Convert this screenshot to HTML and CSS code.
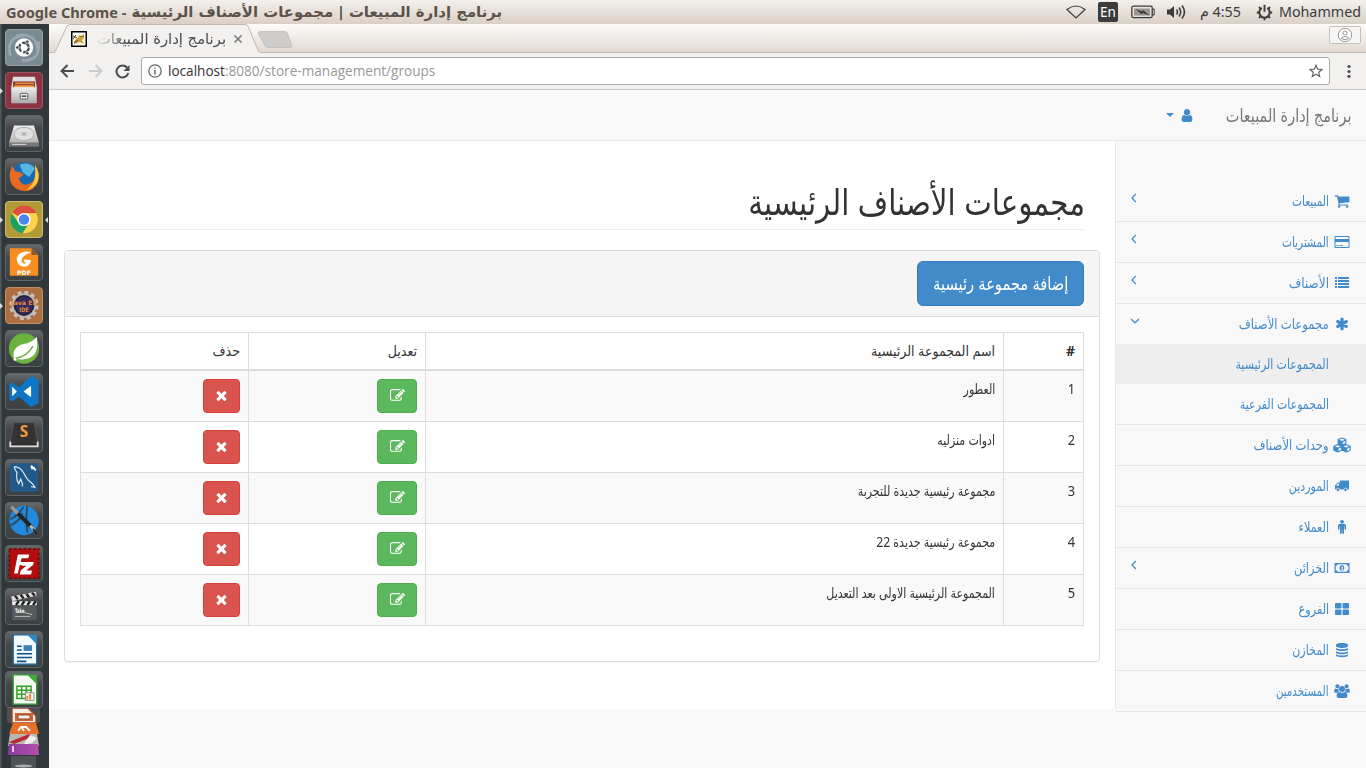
FILE: index.html
```html
<!DOCTYPE html>
<html lang="ar">
<head>
<meta charset="utf-8">
<title>برنامج إدارة المبيعات | مجموعات الأصناف الرئيسية</title>
<link rel="stylesheet" href="styles.css">
</head>
<body>
<svg class="defs" width="0" height="0">
  <defs>
    <linearGradient id="metal" x1="0" y1="0" x2="0" y2="1"><stop offset="0" stop-color="#eee"/><stop offset="1" stop-color="#aaa"/></linearGradient>
    <linearGradient id="purple" x1="0" y1="0" x2="1" y2="0"><stop offset="0" stop-color="#8a3c9c"/><stop offset="1" stop-color="#b64fae"/></linearGradient>
    <symbol id="times" viewBox="0 0 1792 1792"><path d="M1490 1322q0 40-28 68l-136 136q-28 28-68 28t-68-28l-294-294-294 294q-28 28-68 28t-68-28l-136-136q-28-28-28-68t28-68l294-294-294-294q-28-28-28-68t28-68l136-136q28-28 68-28t68 28l294 294 294-294q28-28 68-28t68 28l136 136q28 28 28 68t-28 68l-294 294 294 294q28 28 28 68z"/></symbol>
    <symbol id="edit" viewBox="0 0 1792 1792"><path d="M888 1184l116-116-152-152-116 116v56h96v96h56zm440-720q-16-16-33 1l-350 350q-17 17-1 33t33-1l350-350q17-17 1-33zm80 594v190q0 119-84.5 203.5t-203.5 84.5h-832q-119 0-203.5-84.5t-84.5-203.5v-832q0-119 84.5-203.5t203.5-84.5h832q63 0 117 25 15 7 18 23 3 17-9 29l-49 49q-14 14-32 8-23-6-45-6h-832q-66 0-113 47t-47 113v832q0 66 47 113t113 47h832q66 0 113-47t47-113v-126q0-13 9-22l64-64q15-15 35-7t20 29zm-96-738l288 288-672 672h-288v-288zm444 132l-92 92-288-288 92-92q28-28 68-28t68 28l152 152q28 28 28 68t-28 68z"/></symbol>
    <symbol id="cart" viewBox="0 0 1792 1792"><path d="M704 1536q0 52-38 90t-90 38-90-38-38-90 38-90 90-38 90 38 38 90zm896 0q0 52-38 90t-90 38-90-38-38-90 38-90 90-38 90 38 38 90zm128-1088v512q0 24-16.500 42.500t-40.500 21.500l-1044 122q13 60 13 70 0 16-24 64h920q26 0 45 19t19 45-19 45-45 19h-1024q-26 0-45-19t-19-45q0-11 8-31.500t16-36 21.500-40 15.500-29.500l-177-823h-204q-26 0-45-19t-19-45 19-45 45-19h256q16 0 28.500 6.500t19.500 15.500 13 24.500 8 26 5.500 29.500 4.500 26h1201q26 0 45 19t19 45z"/></symbol>
    <symbol id="user" viewBox="0 0 1792 1792"><path d="M1536 1399q0 109-62.500 187t-150.500 78h-854q-88 0-150.500-78t-62.500-187q0-85 8.500-160.500t31.500-152 58.500-131 94-89 134.500-34.500q131 128 313 128t313-128q76 0 134.500 34.500t94 89 58.500 131 31.500 152 8.500 160.500zm-256-887q0 159-112.500 271.500t-271.500 112.500-271.500-112.500-112.500-271.500 112.500-271.500 271.500-112.500 271.500 112.500 112.500 271.500z"/></symbol>
    <symbol id="card" viewBox="0 0 16 16"><path fill-rule="evenodd" d="M1.500 2h13q1 0 1 1v10q0 1-1 1h-13q-1 0-1-1V3q0-1 1-1zM1.500 3v2h13V3zM1.500 8v5h13V8zM2.500 11h2v1h-2zM5.500 11h3v1h-3z"/></symbol>
    <symbol id="list" viewBox="0 0 16 16"><path d="M1 2h2v2H1zM4 2h11v2H4zM1 5h2v2H1zM4 5h11v2H4zM1 8h2v2H1zM4 8h11v2H4zM1 11h2v2H1zM4 11h11v2H4z"/></symbol>
    <symbol id="star6" viewBox="0 0 16 16"><path d="M8 3.200v9.600M3.800 5.600l8.400 4.800M12.200 5.600l-8.400 4.800" stroke="#428bca" stroke-width="3.300" stroke-linecap="round"/></symbol>
    <symbol id="cubes" viewBox="0 0 18 16"><g fill="#428bca" stroke="#428bca" stroke-width="1.200" stroke-linejoin="round"><path d="M9 1l3.800 1.600v4L9 8.300 5.200 6.600v-4zM4.700 7.700l3.800 1.600v4l-3.800 1.700L.9 13.300v-4zM13.300 7.700l3.800 1.600v4l-3.800 1.700-3.800-1.700v-4z"/></g><path fill="#f8f8f8" d="M9 1.500l2.800 1.200L9 3.900 6.200 2.700zM9.800 5.100l2.500-1.200v2.300L9.800 7.300zM4.700 8.200l2.800 1.200-2.800 1.200-2.800-1.200zM5.500 11.800L8 10.600v2.300L5.500 14zM13.300 8.200l2.800 1.200-2.800 1.200-2.800-1.200zM14.100 11.800l2.500-1.200v2.300L14.100 14z"/></symbol>
    <symbol id="truck" viewBox="0 0 16 16"><path d="M6 2.500h9v9H6zM1 7.500l2.500-3H6v7H1z"/><path fill="#f8f8f8" d="M2 7.500l1.800-2H5v2z"/><circle cx="4" cy="11.800" r="1.700" stroke="#f8f8f8" stroke-width=".7"/><circle cx="11.500" cy="11.800" r="1.700" stroke="#f8f8f8" stroke-width=".7"/></symbol>
    <symbol id="male" viewBox="0 0 16 16"><circle cx="8" cy="2.800" r="1.900"/><path d="M5.500 5h5q1.500 0 1.500 1.500V10q0 .8-.7.800t-.8-.8V7.200H10v6.900q0 .9-.9.900t-.9-.9v-3.600h-.4v3.600q0 .9-.9.900t-.9-.9V7.200h-.5V10q0 .8-.8.800T4 10V6.500Q4 5 5.500 5z"/></symbol>
    <symbol id="money" viewBox="0 0 16 16"><path fill-rule="evenodd" d="M.5 3h15v10H.5zM3.500 4.200q0 1.800-1.800 1.800v4q1.800 0 1.800 1.800h9q0-1.800 1.800-1.800V6q-1.800 0-1.800-1.800z"/><path fill-rule="evenodd" d="M8 5c3.200 0 3.200 6 0 6s-3.200-6 0-6zm-.8 1.500v1h.5v2H7v.7h2.200v-.7h-.5v-3z"/></symbol>
    <symbol id="large" viewBox="0 0 16 16"><rect x="1" y="2" width="6.500" height="5.500" rx="1"/><rect x="8.500" y="2" width="6.500" height="5.500" rx="1"/><rect x="1" y="8.500" width="6.500" height="5.500" rx="1"/><rect x="8.500" y="8.500" width="6.500" height="5.500" rx="1"/></symbol>
    <symbol id="database" viewBox="0 0 16 16"><path d="M2 3c0-2.600 12-2.600 12 0v1c0 2.600-12 2.600-12 0zM2 6c2 1.700 10 1.700 12 0v1.300c0 2.400-12 2.400-12 0zM2 9.200c2 1.700 10 1.700 12 0v1.300c0 2.400-12 2.400-12 0zM2 12.300c2 1.700 10 1.700 12 0v.9c0 2.600-12 2.600-12 0z"/></symbol>
    <symbol id="users" viewBox="0 0 16 16"><circle cx="3.400" cy="3.300" r="2"/><circle cx="12.600" cy="3.300" r="2"/><path d="M.3 9V6.500Q.5 5.300 2 5.700q1.500.6 2.800-.2Q4 7 5 8.500 3.500 8.800 3 9.800H1Q.3 9.600.3 9zM15.700 9V6.500q-.2-1.200-1.700-.8-1.500.6-2.800-.2.800 1.500-.2 3 1.500.3 2 1.300h2q.7-.2.700-.8z"/><circle cx="8" cy="5.900" r="3"/><path d="M4.900 8.700Q8 11 11.100 8.700q2.300.8 2.300 4.300 0 2-1.900 2h-7q-1.900 0-1.900-2 0-3.500 2.300-4.300z"/></symbol>
    <symbol id="left" viewBox="0 0 8 10"><path d="M5.800 1L2 5l3.800 4" fill="none" stroke="#428bca" stroke-width="1.200"/></symbol>
    <symbol id="down" viewBox="0 0 10 8"><path d="M1 2l4 3.800L9 2" fill="none" stroke="#428bca" stroke-width="1.200"/></symbol>
  </defs>
</svg>

<header class="menubar">
  <div class="wintitle" dir="rtl"><span class="ar">برنامج إدارة المبيعات | مجموعات الأصناف الرئيسية</span><span class="lat" dir="ltr">Google Chrome -</span></div>
  <div class="indicators">
    <svg class="wifi" width="20" height="16" viewBox="0 0 20 16"><path d="M1 5.500Q10-1.500 19 5.500L10 14z" fill="none" stroke="#3c3c3c" stroke-width="1.200"/></svg>
    <span class="lang">En</span>
    <svg class="battery" width="24" height="14" viewBox="0 0 24 14"><rect x=".8" y="1.200" width="20.400" height="11.400" rx="1.500" fill="none" stroke="#3c3c3c" stroke-width="1.300"/><path d="M21.500 4h1.700v6h-1.700" fill="none" stroke="#3c3c3c"/><rect x="3" y="3.500" width="16" height="7" fill="#999691"/><path d="M4.500 4l7 2.600.6-1.600L18.500 10.500l-7-2.600-.6 1.600z" fill="#3c3c3c"/></svg>
    <svg class="sound" width="21" height="16" viewBox="0 0 21 16"><path d="M1 5.500h3l4-3.500v12l-4-3.500H1z" fill="#3c3c3c"/><path d="M10.500 5.500q2 2.500 0 5M13 3.500q3.500 4.500 0 9M16 1.500q5 6.500 0 13" fill="none" stroke="#3c3c3c" stroke-width="1.600"/></svg>
    <span class="clock" dir="rtl">4:55 م</span>
    <svg class="gear" width="17" height="17" viewBox="0 0 17 17"><path d="M5.800 4A5.200 5.200 0 1 0 11.200 4" fill="none" stroke="#3c3c3c" stroke-width="2"/><path d="M8.500 .8v7M.8 8.500h2.500M13.700 8.500h2.500M8.500 13.500v2.700M3 3l1.800 1.800M14 3l-1.800 1.800M3 14l1.800-1.800M14 14l-1.800-1.800" stroke="#3c3c3c" stroke-width="1.900"/></svg>
    <span class="who">Mohammed</span>
  </div>
</header>

<div class="desktop">
  <aside class="launcher">
    <div class="app dash"><svg viewBox="0 0 37 37"><path d="M4 27Q-1 7 19 6M10 6q22-4 23 16M34 12q2 22-18 20" fill="none" stroke="#b7c2c8" stroke-width="3" opacity=".5"/><circle cx="18.500" cy="18.500" r="9.700" fill="#fff"/><circle cx="18.500" cy="18.500" r="5" fill="none" stroke="#4a4f52" stroke-width="2.500" stroke-dasharray="8.700 1.800"/><g fill="#4a4f52" stroke="#fff" stroke-width=".7"><circle cx="11.500" cy="18.500" r="1.900"/><circle cx="22" cy="12.400" r="1.900"/><circle cx="22" cy="24.600" r="1.900"/></g></svg></div>
    <div class="app red run"><svg viewBox="0 0 37 37"><path d="M7 4h23l2 11H5z" fill="#ddd"/><path d="M7 9h23v8H7z" fill="#7c2c12"/><path d="M9 10h20v2H9z" fill="#e9894e"/><path d="M8 13h21v3H8z" fill="#f0a050"/><path d="M5 15h27v17H5z" fill="url(#metal)"/><rect x="14.500" y="21.500" width="8" height="6" rx="1" fill="#eee" stroke="#555"/><path d="M16 24.500h5" stroke="#444" stroke-width="1.500"/></svg></div>
    <div class="app"><svg viewBox="0 0 37 37"><path d="M8 10h21l5 17v5H3v-5z" fill="url(#metal)"/><ellipse cx="18.500" cy="19" rx="10.500" ry="7" fill="#e0e0e0" stroke="#aaa"/><ellipse cx="18.500" cy="19" rx="3" ry="2" fill="#bbb"/><path d="M3 28h31v4H3z" fill="#777"/><path d="M6 30h15" stroke="#ddd"/></svg></div>
    <div class="app"><svg viewBox="0 0 37 37"><circle cx="19" cy="17.500" r="14" fill="#1b68b2"/><path d="M14 6q10-4 16 4l-6 9-7-5z" fill="#56b6e3"/><path d="M30 6q7 9 3 19-4 9-14 9Q7 33 4 23 2 15 6 7l3 6 6 1 3 3-5 3q2 8 9 7 8-2 9-10 1-6-1-11z" fill="#e66a20"/><path d="M30 6q7 10 2 20-5 6-11 7 8-6 9-14 1-7 0-13z" fill="#fdc83d"/></svg></div>
    <div class="app gold run active"><svg viewBox="0 0 37 37"><circle cx="18.500" cy="18.500" r="14.500" fill="#fdd14a"/><path d="M18.500 18.500L6 11.200A14.500 14.500 0 0 1 31.500 11.500H18.500z" fill="#dd4e3f"/><path d="M5.500 12A14.500 14.500 0 0 0 17 33l7-11-11.500-.5z" fill="#1da261"/><circle cx="18.500" cy="18.500" r="7" fill="#fff"/><circle cx="18.500" cy="18.500" r="5.500" fill="#4b83ef"/></svg></div>
    <div class="app"><svg viewBox="0 0 37 37"><path d="M3.500 3.500h23l7 7v22h-30z" fill="#f88d20"/><path d="M26.500 3.500v7h7z" fill="#8b5a26"/><path d="M26 8q-5-2-10 0-6 3-5 8 1 6 7 7 7 0 8-7l-7-1-1 3 3 .5q-3 3-5-1-1-6 10-9.500z" fill="#fff"/><text x="18.500" y="31.500" text-anchor="middle" class="tiny white">PDF</text></svg></div>
    <div class="app brown run"><svg viewBox="0 0 37 37"><circle cx="18.500" cy="18.500" r="13.500" fill="none" stroke="#c4c4c4" stroke-width="4" stroke-dasharray="4 3.070"/><circle cx="18.500" cy="18.500" r="12" fill="#2a2237" stroke="#bbb" stroke-width="2"/><circle cx="18.500" cy="18.500" r="9" fill="#352c62"/><text x="18.500" y="18" text-anchor="middle" textLength="27" lengthAdjust="spacingAndGlyphs" class="tiny orange">Java EE</text><text x="18.500" y="25" text-anchor="middle" textLength="10" lengthAdjust="spacingAndGlyphs" class="tiny orange">IDE</text></svg></div>
    <div class="app"><svg viewBox="0 0 37 37"><circle cx="18.500" cy="18.500" r="16" fill="#6cb33e"/><path d="M32 6q3 19-9 23-7 2-15 0-3-11 9-15Q28 12 32 6z" fill="#fff"/><path d="M9 29q13-2 19-13" fill="none" stroke="#6cb33e" stroke-width="1.500"/><circle cx="9" cy="30" r="1.500" fill="#fff"/></svg></div>
    <div class="app"><svg viewBox="0 0 37 37"><path d="M26 2l8 4v25l-8 4-13-11-7 5-3-2V10l3-1 7 5z" fill="#0f75c5"/><path d="M6 13.500v10l5-5zM26 12.500v12l-8-6z" fill="#fff"/></svg></div>
    <div class="app"><svg viewBox="0 0 37 37"><path d="M8 6h21l4 20v5H4v-5z" fill="#333" stroke="#555"/><path d="M4 26v5h29v-5" fill="none" stroke="#ddd" stroke-width="2"/><text x="18.500" y="21" text-anchor="middle" class="subl">S</text></svg></div>
    <div class="app"><svg viewBox="0 0 37 37"><rect x="3.500" y="3.500" width="30" height="30" rx="3" fill="#215a88"/><path d="M8 7q7 0 11 8 3 6 6 8 4 3 5 6l-4-1M8 7q1 4 3 6-1 8 2 12l2-5q2 4 2 8" fill="none" stroke="#dbe8f1" stroke-width="1.300"/><path d="M26 6l5 5M26 6l1 3 3-1" stroke="#fff" stroke-width="1.800" fill="none"/></svg></div>
    <div class="app"><svg viewBox="0 0 37 37"><circle cx="18.500" cy="18.500" r="15.500" fill="#2289dd"/><path d="M18 4q-6 10-14 13M22 3q-2 14 0 28M4 24q10-5 13-13" fill="none" stroke="#2c4a60" stroke-width="2"/><path d="M5 4l10 10" stroke="#999" stroke-width="3.500"/><path d="M12 11l15 15" stroke="#222" stroke-width="4"/><path d="M25 24l4 4" stroke="#bbb" stroke-width="3"/><path d="M28 27l4 6" stroke="#222" stroke-width="1.500"/></svg></div>
    <div class="app"><svg viewBox="0 0 37 37"><rect x="3" y="3" width="31" height="31" fill="#b40d0d" stroke="#720d0d" stroke-width="2" stroke-dasharray="3 2"/><path d="M12 9h12l-1 4h-7l-1 4h6l-1 3h-6l-2 9H8zM17 17h12l-1 3-7 6h6l-1 4H14l1-4 6-5h-5z" fill="#fff"/></svg></div>
    <div class="app"><svg viewBox="0 0 37 37"><path d="M6 17h26v16H6z" fill="#555a5c"/><path d="M6 13h26v4H6z" fill="#eee"/><path d="M5 8l26-5 1 4-26 6z" fill="#ddd"/><path d="M9 7l3 4M15 6l3 4M21 5l3 4M27 4l3 3M10 17l3-4M16 17l3-4M22 17l3-4M28 17l3-4" stroke="#222" stroke-width="2.500"/><text x="9" y="25" textLength="10" lengthAdjust="spacingAndGlyphs" class="tiny white">Take</text><path d="M19 25l8 2M9 29h16" stroke="#bbb"/></svg></div>
    <div class="app"><svg viewBox="0 0 37 37"><path d="M7 3h17l8 8v23H7z" fill="#f4f8fa" stroke="#15659b" stroke-width="1.500"/><path d="M22 3h10v10z" fill="#2b8ac9"/><path d="M11 15h5M11 19h5M11 23h16M11 27h16M11 31h10" stroke="#0d5488" stroke-width="1.700"/><rect x="18" y="14" width="9" height="6" fill="#3b83b5"/></svg></div>
    <div class="app calc"><svg viewBox="0 0 37 37"><path d="M7 3h17l8 8v23H7z" fill="#f4faf2" stroke="#2b9a2b" stroke-width="1.500"/><path d="M22 3h10v10z" fill="#3fae38"/><path d="M11 15h15v13H11zM11 19.300h15M11 23.600h15M16 15v13M21 15v13" fill="none" stroke="#37a02e" stroke-width="1.600"/><path d="M20 22h9v8h-9z" fill="#fff" stroke="#888"/><path d="M22 29v-4M25 29v-6" stroke="#e87f32" stroke-width="2"/></svg></div>
    <svg class="stack" width="37" height="62" viewBox="0 0 37 62"><rect x="2" width="33" height="16" rx="3" fill="#4a4f51"/><path d="M7 1h16l8 8v7H7z" fill="#f3ece5" stroke="#9b4825" stroke-width="1.500"/><path d="M10 6h18v8H10z" fill="#ca6438"/><path d="M13 8h12v4H13z" fill="#eee" stroke="#9b4825"/><path d="M8 16h23l3 11H4z" fill="#e86f29"/><path d="M13 24l3-4h5l4 4M17 21l2 3" fill="none" stroke="#fff" stroke-width="1.800"/><path d="M5 27h27l2 12H3z" fill="#b9b7b1"/><path d="M4 35l20-8 3 3-18 7z" fill="#b62b34"/><path d="M25 28l7 3-5 5-9 2" fill="#eee"/><path d="M4 37h29l1 11H3z" fill="url(#purple)"/><path d="M8 39v6" stroke="#efc9f0" stroke-width="2"/><path d="M6 49h25v13H6z" fill="#4d5254"/><ellipse cx="18.500" cy="59" rx="9" ry="1.500" fill="#aaa"/></svg>
  </aside>

  <section class="chrome">
    <div class="tabs">
      <svg class="tabshape" width="245" height="29" viewBox="0 0 245 29"><path d="M0 28.500h4.500Q6 28.500 7 26L18 2Q19 .5 21 .5H196Q198 .5 199 2L209 26Q210 28.500 212 28.500H245V30H0z" fill="#f2f1f0" stroke="#c3b6aa"/><path d="M211 7.500H235Q237.500 7.500 238.500 9.500L242.500 21Q243 23.500 241 23.500H219Q217 23.500 216 21.500L209.500 10Q209 7.500 211 7.500z" fill="#cfcdcb" stroke="#c4c1be"/></svg>
      <div class="tab"><svg class="fav" width="16" height="16" viewBox="0 0 16 16"><rect x=".75" y=".75" width="14.500" height="14.500" fill="#f8f8ef" stroke="#000" stroke-width="1.500"/><path d="M3 11q1-3 4-4l1-3 2 1 3-2v4l-2 2 2 4-4-2-3 1-3 1z" fill="#d29b3a"/><path d="M2 5l4 2M2 8l3-4M10 5v1M12 5v1M3 12l4-3" stroke="#554a38"/></svg><span class="tabname" dir="rtl">برنامج إدارة المبيعات</span><svg class="x" width="8" height="8" viewBox="0 0 8 8"><path d="M.5.5l7 7M7.500.5l-7 7" stroke="#777" stroke-width="1.500"/></svg></div>
      <svg class="profile" width="32" height="18" viewBox="0 0 32 18"><rect x=".5" y=".5" width="31" height="17" rx="1" fill="#f7f5f3" stroke="#c2bfbc"/><circle cx="16" cy="9" r="6.700" fill="#fff" stroke="#999"/><circle cx="16" cy="7" r="2" fill="none" stroke="#999"/><path d="M12 12.500q4-4 8 0-4 2.500-8 0z" fill="none" stroke="#999"/></svg>
    </div>
    <div class="toolbar">
      <svg class="back" width="14" height="14" viewBox="0 0 14 14"><path d="M7.500 1L1.500 7l6 6M1.500 7H14" fill="none" stroke="#4b4b4b" stroke-width="1.900"/></svg>
      <svg class="fwd" width="14" height="14" viewBox="0 0 14 14"><path d="M6.500 1l6 6-6 6M12.500 7H0" fill="none" stroke="#ccc" stroke-width="1.800"/></svg>
      <svg class="reload" width="15" height="15" viewBox="0 0 15 15"><path d="M12 3.500A6 6 0 1 0 13.300 9" fill="none" stroke="#4b4b4b" stroke-width="2"/><path d="M14.500 1v6h-6z" fill="#4b4b4b"/></svg>
      <div class="omnibox"><svg width="14" height="14" viewBox="0 0 14 14"><circle cx="7" cy="7" r="6.200" fill="none" stroke="#666" stroke-width="1.300"/><path d="M7 6v4.500M7 3.500v1.300" stroke="#666" stroke-width="1.500"/></svg><span class="url"><b>localhost</b>:8080/store-management/groups</span><svg class="bookmark" width="14" height="14" viewBox="0 0 14 14"><path d="M7 1.200l1.700 4 4.300.3-3.300 2.800 1 4.200L7 10.200l-3.700 2.300 1-4.200L1 5.500l4.300-.3z" fill="none" stroke="#666" stroke-width="1.200"/></svg></div>
      <svg class="dots" width="4" height="14" viewBox="0 0 4 14"><g fill="#4b4b4b"><circle cx="2" cy="2.500" r="1.600"/><circle cx="2" cy="7.500" r="1.600"/><circle cx="2" cy="12.300" r="1.600"/></g></svg>
    </div>

    <div class="page" dir="rtl">
      <nav class="navbar"><span class="brand"><span class="sq k89">برنامج إدارة المبيعات</span></span><span class="account"><svg class="ic"><use href="#user"/></svg><svg class="caret" width="8" height="4" viewBox="0 0 8 4"><path d="M0 0h8L4 4z" fill="#428bca"/></svg></span></nav>
      <div class="columns">
        <aside class="side">
          <ul class="menu">
            <li><svg class="ic"><use href="#cart"/></svg><span class="sq k84">المبيعات</span><svg class="arrow"><use href="#left"/></svg></li>
            <li><svg class="ic"><use href="#card"/></svg><span class="sq k84">المشتريات</span><svg class="arrow"><use href="#left"/></svg></li>
            <li><svg class="ic"><use href="#list"/></svg><span class="sq k95">الأصناف</span><svg class="arrow"><use href="#left"/></svg></li>
            <li class="open"><svg class="ic"><use href="#star6"/></svg><span class="sq k92">مجموعات الأصناف</span><svg class="arrow wide"><use href="#down"/></svg></li>
            <li class="sub current"><span class="sq k87">المجموعات الرئيسية</span></li>
            <li class="sub last"><span class="sq k87">المجموعات الفرعية</span></li>
            <li><svg class="ic big"><use href="#cubes"/></svg><span class="sq k92">وحدات الأصناف</span></li>
            <li><svg class="ic"><use href="#truck"/></svg><span class="sq k87">الموردين</span></li>
            <li><svg class="ic"><use href="#male"/></svg><span class="sq k89">العملاء</span></li>
            <li><svg class="ic"><use href="#money"/></svg><span class="sq k89">الخزائن</span><svg class="arrow"><use href="#left"/></svg></li>
            <li><svg class="ic"><use href="#large"/></svg><span class="sq k89">الفروع</span></li>
            <li><svg class="ic"><use href="#database"/></svg><span class="sq k87">المخازن</span></li>
            <li><svg class="ic"><use href="#users"/></svg><span class="sq k82">المستخدمين</span></li>
          </ul>
        </aside>
        <main class="content">
          <h1><span class="sq k90">مجموعات الأصناف الرئيسية</span></h1>
          <div class="panel">
            <div class="heading"><button class="add"><span class="sq k90 mid">إضافة مجموعة رئيسية</span></button></div>
            <div class="body">
              <table>
                <colgroup><col class="c1"><col class="c2"><col class="c3"><col class="c4"></colgroup>
                <thead><tr><th class="num">#</th><th>اسم المجموعة الرئيسية</th><th>تعديل</th><th>حذف</th></tr></thead>
                <tbody>
                  <tr><td><span class="sq k92">1</span></td><td><span class="sq k87">العطور</span></td><td><button class="btn ok"><svg><use href="#edit"/></svg></button></td><td><button class="btn del"><svg><use href="#times"/></svg></button></td></tr>
                  <tr><td><span class="sq k92">2</span></td><td><span class="sq k87">ادوات منزليه</span></td><td><button class="btn ok"><svg><use href="#edit"/></svg></button></td><td><button class="btn del"><svg><use href="#times"/></svg></button></td></tr>
                  <tr><td><span class="sq k92">3</span></td><td><span class="sq k87">مجموعة رئيسية جديدة للتجربة</span></td><td><button class="btn ok"><svg><use href="#edit"/></svg></button></td><td><button class="btn del"><svg><use href="#times"/></svg></button></td></tr>
                  <tr><td><span class="sq k92">4</span></td><td><span class="sq k87">مجموعة رئيسية جديدة 22</span></td><td><button class="btn ok"><svg><use href="#edit"/></svg></button></td><td><button class="btn del"><svg><use href="#times"/></svg></button></td></tr>
                  <tr><td><span class="sq k92">5</span></td><td><span class="sq k87">المجموعة الرئيسية الاولى بعد التعديل</span></td><td><button class="btn ok"><svg><use href="#edit"/></svg></button></td><td><button class="btn del"><svg><use href="#times"/></svg></button></td></tr>
                </tbody>
              </table>
            </div>
          </div>
        </main>
      </div>
    </div>
  </section>
</div>
</body>
</html>
```
FILE: styles.css
```css
* { box-sizing: border-box; }
body { margin: 0; width: 1366px; height: 768px; overflow: hidden; display: flex; flex-direction: column; font: 14px/20px "Noto Sans", "DejaVu Sans Condensed", "DejaVu Sans", sans-serif; font-stretch: condensed; color: #333; }
svg { display: block; flex: none; }
.defs { position: absolute; }

/* top menu bar */
.menubar { flex: none; height: 24px; padding: 0 5px 0 6px; display: flex; align-items: center; justify-content: space-between; background: linear-gradient(#f4f0ec, #d9d0c8); color: #5b5349; }
.wintitle { display: flex; gap: 5px; white-space: nowrap; }
.wintitle .ar { font: bold 14.88px/22px "DejaVu Sans", sans-serif; }
.wintitle .lat { font: bold 14.6px/22px "Noto Sans", sans-serif; }
.indicators { display: flex; align-items: center; white-space: nowrap; font: 14.3px/22px "Noto Sans", "DejaVu Sans", sans-serif; color: #3c3c3c; }
.lang { margin: 0 13px 0 12px; width: 20px; height: 20px; border-radius: 2px; background: #3c3c3c; color: #fff; line-height: 21px; text-align: center; font-size: 13.5px; }
.sound { margin: 0 12px 0 11px; }
.clock { width: 42px; }
.gear { margin: 0 6px 0 15px; }

/* launcher */
.desktop { display: flex; flex: 1; min-height: 0; }
.launcher { flex: none; width: 49px; height: 744px; padding: 5px 0 0 5px; background: linear-gradient(90deg, #50585a 0, #50585a 1px, #30383b 2px, #30383b 100%); display: flex; flex-direction: column; gap: 6px; overflow: hidden; }
.app { position: relative; flex: none; width: 38px; height: 37px; border-radius: 4px; border: 1px solid #5f6466; background: linear-gradient(#66696b, #44484a 35%, #3c4143); }
.app > svg { width: 36px; height: 35px; }
.app.dash { background: #7b8b93; border-color: #93a0a6; }
.app.red { background: #8c3342; border-color: #a05461; }
.app.gold { background: #b29a38; border-color: #cdbd6d; }
.app.brown { background: #af6e40; border-color: #c48d65; }
.app.calc { margin-top: -3px; }
.run::before { content: ""; position: absolute; left: -6px; top: 15px; border: 3px solid transparent; border-left-color: #ddd; }
.active::after { content: ""; position: absolute; right: -6px; top: 15px; border: 3px solid transparent; border-right-color: #ddd; }
.stack { margin-top: -7px; }
.tiny { font: bold 6.5px "DejaVu Sans", sans-serif; }
.white { fill: #fff; }
.orange { fill: #e48b35; }
.subl { font: bold 16px "Open Sans", sans-serif; fill: #f79a3e; }

/* browser window */
.chrome { flex: 1; min-width: 0; display: flex; flex-direction: column; }
.tabs { position: relative; flex: none; height: 29px; display: flex; justify-content: space-between; padding-right: 5px; background: linear-gradient(#fdfcfb, #e2dad2); border-bottom: 1px solid #c3b6aa; }
.tabshape { position: absolute; left: 0; top: 0; }
.tab { position: relative; display: flex; align-items: center; padding: 0 0 0 22px; height: 30px; }
.tabname { width: 131px; margin: 0 8px 0 8px; height: 22px; overflow: hidden; white-space: nowrap; font: 14.8px/22px "DejaVu Sans", sans-serif; color: #4a4a4a; -webkit-mask-image: linear-gradient(90deg, transparent, #000 32px); mask-image: linear-gradient(90deg, transparent, #000 32px); }
.profile { margin-top: 2px; }
.toolbar { flex: none; height: 37px; display: flex; align-items: center; padding: 0 15px 0 11px; background: #f2f1f0; border-bottom: 1px solid #cbc9c7; }
.fwd { margin-left: 15px; }
.reload { margin: 0 11px 0 12px; }
.omnibox { flex: 1; height: 28px; display: flex; align-items: center; gap: 6px; padding: 0 6px; background: #fff; border: 1px solid #aeacaa; border-radius: 3px; }
.url { flex: 1; font: 13.6px/22px "Open Sans", sans-serif; color: #999; }
.url b { font-weight: 400; color: #333; }
.dots { margin-left: 17px; }

/* page */
.page { flex: 1; min-height: 0; background: #f8f8f8; }
.navbar { height: 51px; border-bottom: 1px solid #e7e7e7; display: flex; align-items: center; padding-right: 15px; }
.brand { font-size: 18px; line-height: 24px; color: #777; width: 156px; white-space: nowrap; }
.account { display: flex; align-items: center; gap: 5px; }
.ic { width: 16px; height: 16px; fill: #428bca; }
.account .ic { width: 16px; height: 15px; }
.columns { display: flex; height: 568px; }
.side { flex: none; width: 251px; height: 568px; border-left: 1px solid #e7e7e7; }
.menu { list-style: none; margin: 0; padding: 40px 0 0; color: #428bca; }
.menu li { height: 41px; display: flex; align-items: center; gap: 5px; padding: 0 16px 0 14px; border-bottom: 1px solid #e7e7e7; white-space: nowrap; }
.menu .big { width: 18px; margin: 0 -1px; }
.menu li.open { height: 40px; border-bottom: 0; }
.menu li.sub { height: 40px; padding-right: 37px; border-bottom: 0; }
.menu li.current { background: #eee; }
.menu li.last { height: 41px; border-bottom: 1px solid #e7e7e7; }
.arrow { width: 8px; height: 10px; margin: 0 auto 6px 0; }
.arrow.wide { width: 10px; height: 8px; }

/* horizontally condensed Arabic lettering */
.sq { display: inline-block; white-space: nowrap; transform-origin: 100% 50%; }
.mid { transform-origin: 50% 50%; }
.k82 { transform: scaleX(.815); }
.k84 { transform: scaleX(.84); }
.k87 { transform: scaleX(.874); }
.k89 { transform: scaleX(.895); }
.k90 { transform: scaleX(.905); }
.k92 { transform: scaleX(.92); }
.k95 { transform: scaleX(.96); }

.content { flex: 1; min-width: 0; padding: 40px 15px 0 15px; background: #fff; }
h1 { margin: 0 15px 20px; height: 49px; border-bottom: 1px solid #eee; font-size: 36px; line-height: 42px; font-weight: 400; }
.panel { height: 412px; border: 1px solid #ddd; border-radius: 4px; box-shadow: 0 1px 1px rgba(0,0,0,.05); background: #fff; }
.heading { height: 66px; padding: 10px 15px; background: #f5f5f5; border-bottom: 1px solid #ddd; border-radius: 3px 3px 0 0; }
.add { display: block; width: 167px; height: 45px; padding: 0 0 2px; border: 1px solid #357ebd; border-radius: 6px; background: #428bca; color: #fff; font: inherit; font-size: 18px; line-height: 26px; }
.add .mid { margin: 0 -10px; }
.body { padding: 15px; }
table { width: 1004px; border-collapse: collapse; table-layout: fixed; }
.c1 { width: 80px; } .c2 { width: 578px; } .c3 { width: 177px; } .c4 { width: 168px; }
th, td { border: 1px solid #ddd; padding: 8px; text-align: right; vertical-align: top; line-height: 20px; }
th { height: 37px; padding-bottom: 7px; font-weight: 400; border-bottom-width: 2px; }
th.num { font-weight: 700; }
td { height: 51px; }
tbody tr:nth-child(odd) { background: #f9f9f9; }
.btn { display: flex; align-items: center; justify-content: center; width: 40px; height: 34px; padding: 0; border-radius: 4px; }
.btn svg { width: 15px; height: 15px; fill: #fff; }
.ok { background: #5cb85c; border: 1px solid #4cae4c; }
.del { width: 37px; background: #d9534f; border: 1px solid #d43f3a; }
```
